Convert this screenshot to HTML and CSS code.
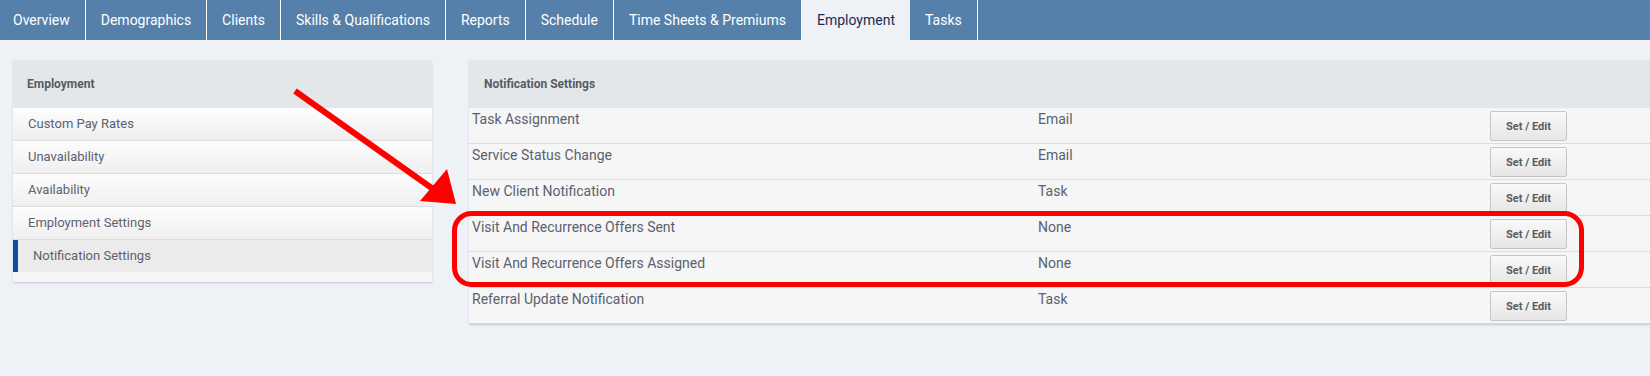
FILE: index.html
```html
<!DOCTYPE html>
<html>
<head>
  <title>Employment - Notification Settings</title>
  <meta name="viewport" content="width=device-width, user-scalable=no">
  <link rel="stylesheet" href="styles.css">
</head>
<body>
  <div class="tabs">
    <a class="tab">Overview</a>
    <a class="tab">Demographics</a>
    <a class="tab">Clients</a>
    <a class="tab">Skills &amp; Qualifications</a>
    <a class="tab">Reports</a>
    <a class="tab">Schedule</a>
    <a class="tab">Time Sheets &amp; Premiums</a>
    <a class="tab active">Employment</a>
    <a class="tab">Tasks</a>
  </div>

  <div class="content">
    <div class="panel side">
      <div class="panel-head">Employment</div>
      <ul class="menu">
        <li>Custom Pay Rates</li>
        <li>Unavailability</li>
        <li>Availability</li>
        <li>Employment Settings</li>
        <li class="current">Notification Settings</li>
      </ul>
    </div>

    <div class="panel main">
      <div class="panel-head">Notification Settings</div>
      <div class="row">
        <div class="cell">Task Assignment</div>
        <div class="cell">Email</div>
        <div class="cell"><button class="btn">Set / Edit</button></div>
      </div>
      <div class="row">
        <div class="cell">Service Status Change</div>
        <div class="cell">Email</div>
        <div class="cell"><button class="btn">Set / Edit</button></div>
      </div>
      <div class="row">
        <div class="cell">New Client Notification</div>
        <div class="cell">Task</div>
        <div class="cell"><button class="btn">Set / Edit</button></div>
      </div>
      <div class="row">
        <div class="cell">Visit And Recurrence Offers Sent</div>
        <div class="cell">None</div>
        <div class="cell"><button class="btn">Set / Edit</button></div>
      </div>
      <div class="row">
        <div class="cell">Visit And Recurrence Offers Assigned</div>
        <div class="cell">None</div>
        <div class="cell"><button class="btn">Set / Edit</button></div>
      </div>
      <div class="row">
        <div class="cell">Referral Update Notification</div>
        <div class="cell">Task</div>
        <div class="cell"><button class="btn">Set / Edit</button></div>
      </div>
    </div>
  </div>

  <!-- annotation drawn over the screenshot -->
  <svg class="markup" width="1650" height="376" viewBox="0 0 1650 376">
    <line x1="295" y1="91" x2="433" y2="189" stroke="#f00" stroke-width="6"/>
    <polygon points="456,204 420,201 447,169" fill="#f00"/>
    <rect x="454.5" y="213.5" width="1127" height="71" rx="17" fill="none" stroke="#f00" stroke-width="5"/>
  </svg>
</body>
</html>
```

FILE: styles.css
```css
body {
  margin: 0;
  background-color: #eef2f6;
  font-family: Roboto, "Liberation Sans", sans-serif;
  position: relative;
  height: 376px;
  overflow: hidden;
}
.tabs {
  display: flex;
  height: 40px;
  background-color: #5580aa;
}
.tab {
  display: block;
  padding: 0 15px;
  line-height: 40px;
  font-size: 14px;
  color: #fff;
  border-right: 1px solid #fff;
}
.tab:first-child {
  padding-left: 13px;
}
.tab.active {
  background-color: #eef2f6;
  color: #1c2b4e;
  border-right: none;
}
.content {
  display: flex;
  align-items: flex-start;
  padding: 20px 0 0 13px;
  gap: 37px;
}
.panel {
  background-color: #f6f6f6;
  border-radius: 3px 3px 0 0;
  box-shadow: 0 1px 2px rgba(0,0,0,.18);
}
.side {
  width: 419px;
  padding-bottom: 10px;
}
.main {
  flex: 1;
  border-bottom: 1px solid #d8d8d8;
}
.panel-head {
  height: 48px;
  line-height: 48px;
  padding: 0 14px;
  background-color: #e3e7ea;
  font-size: 12px;
  font-weight: bold;
  color: #555b63;
}
.main .panel-head {
  padding: 0 15px;
}
.menu {
  list-style: none;
  margin: 0;
  padding: 0;
}
.menu li {
  height: 32px;
  line-height: 32px;
  padding: 0 15px;
  font-size: 13px;
  color: #5b626e;
  border-bottom: 1px solid #dedede;
  background-image: linear-gradient(#fdfdfd, #efefef);
}
.menu li.current {
  border-bottom: none;
  border-left: 5px solid #0e4c9c;
  background-image: none;
  background-color: #ebebeb;
}
.row {
  display: grid;
  grid-template-columns: 566px 452px 1fr;
  border-bottom: 1px solid #dcdcdc;
}
.row:last-child {
  border-bottom: none;
}
.cell {
  padding: 3px 3px 2px;
  font-size: 14px;
  line-height: 17px;
  color: #5b616e;
}
.btn {
  display: block;
  width: 77px;
  height: 30px;
  padding: 0;
  font-family: Roboto, "Liberation Sans", sans-serif;
  font-size: 11px;
  font-weight: bold;
  color: #565b63;
  background-image: linear-gradient(#f9f9f9, #e6e6e6);
  border: 1px solid #c6c6c6;
  border-radius: 2px;
}
.markup {
  position: absolute;
  top: 0;
  left: 0;
  pointer-events: none;
}
```
